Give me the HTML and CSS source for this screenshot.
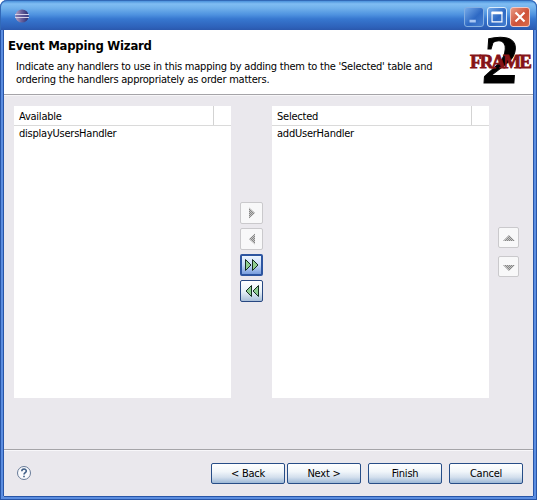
FILE: index.html
```html
<!DOCTYPE html>
<html lang="en">
<head>
<meta charset="utf-8">
<title>Event Mapping Wizard</title>
<link rel="stylesheet" href="styles.css">
</head>
<body>
<div class="window">
  <div class="titlebar">
    <svg class="app-icon" width="16" height="16" viewBox="0 0 16 16">
      <defs><linearGradient id="orb" x2="1"><stop offset="0" stop-color="#b9a5c4"/><stop offset=".45" stop-color="#69629d"/><stop offset="1" stop-color="#272c72"/></linearGradient></defs>
      <circle cx="8" cy="8" r="6.6" fill="url(#orb)"/>
      <path d="M1 6.500h14M1 9.500h14" stroke="#d5d2e8"/><path d="M2 8h12" stroke="#565399"/>
    </svg>
    <div class="controls">
      <svg class="control dim" viewBox="0 0 20 20"><path d="M5 14.500h7" stroke="#a9c8f5" stroke-width="3"/></svg>
      <svg class="control" viewBox="0 0 20 20"><path d="M4.500 5h11v10.500h-11z" fill="none" stroke="#fff" stroke-width="1.300"/><path d="M4 5.500h12" stroke="#fff" stroke-width="3"/></svg>
      <svg class="control close" viewBox="0 0 20 20"><path d="M5 5l10 10M15 5L5 15" stroke="#fff" stroke-width="2.400"/></svg>
    </div>
  </div>
  <div class="header">
    <div class="heading">
      <h1>Event Mapping Wizard</h1>
      <p>Indicate any handlers to use in this mapping by adding them to the 'Selected' table and<br>ordering the handlers appropriately as order matters.</p>
    </div>
    <svg class="logo" width="66" height="64" viewBox="0 0 66 64">
      <text class="logo-two" transform="translate(13 53) skewX(-4)" font-size="69" textLength="36" lengthAdjust="spacingAndGlyphs">2</text>
      <text class="logo-frame" x="2" y="38" font-size="19" textLength="62" lengthAdjust="spacing">FRAME</text>
    </svg>
  </div>
  <div class="content">
    <div class="table">
      <div class="table-head">Available</div>
      <div class="table-row">displayUsersHandler</div>
    </div>
    <div class="transfer">
      <div class="tool disabled"><svg width="22" height="20" viewBox="0 0 22 20"><path d="M8 4.500v11l6-5.500z" fill="url(#dots)"/></svg></div>
      <div class="tool disabled"><svg width="22" height="20" viewBox="0 0 22 20"><path d="M14 4.500v11l-6-5.500z" fill="url(#dots)"/></svg></div>
      <div class="tool active focused"><svg width="22" height="20" viewBox="0 0 22 20"><path d="M4.500 4.500v11l5.500-5.500zM11.500 4.500v11l5.500-5.500z" fill="#8fce91" stroke="#142d20"/></svg></div>
      <div class="tool active"><svg width="22" height="20" viewBox="0 0 22 20"><path d="M10.500 4.500v11l-5.500-5.500zM17.500 4.500v11l-5.500-5.500z" fill="#8fce91" stroke="#142d20"/></svg></div>
    </div>
    <div class="table">
      <div class="table-head">Selected</div>
      <div class="table-row">addUserHandler</div>
    </div>
    <div class="ordering">
      <div class="tool disabled"><svg width="20" height="20" viewBox="0 0 20 20"><path d="M4 13h12l-6-6z" fill="url(#dots)"/></svg></div>
      <div class="tool disabled"><svg width="20" height="20" viewBox="0 0 20 20"><defs><pattern id="dots" width="2" height="2" patternUnits="userSpaceOnUse"><path d="M0 0h2v2H0z" fill="#c6c6c6"/><path d="M0 0h1v1H0zM1 1h1v1H1z" fill="#858585"/></pattern></defs><path d="M4 8h12l-6 6z" fill="url(#dots)"/></svg></div>
    </div>
  </div>
  <div class="footer">
    <svg class="help" width="16" height="16" viewBox="0 0 16 16"><circle cx="8" cy="8" r="6.500" fill="#f9fafd" stroke="#687b98"/><path d="M5.800 6.300c0-3 4.500-2.900 4.500-.3C10.300 7.600 8 7.700 8 9.500M8 10.700v1.500" fill="none" stroke="#405f87" stroke-width="1.600"/></svg>
    <div class="buttons"><button>&lt; Back</button><button>Next &gt;</button><button class="spaced">Finish</button><button class="spaced">Cancel</button></div>
  </div>
</div>
</body>
</html>
```
FILE: styles.css
```css
* { box-sizing: border-box; }
body { margin: 0; background: #fff; font: 11px/13px "DejaVu Sans Condensed", "DejaVu Sans", sans-serif; font-stretch: condensed; letter-spacing: -.23px; color: #000; overflow: hidden; }
.window { width: 537px; height: 500px; display: flex; flex-direction: column; padding: 0 4px 4px; background: #5b8de0; border-radius: 7px 7px 0 0; box-shadow: inset 1px 0 #2855a8, inset -1px -1px #2855a8; }
.titlebar { height: 30px; flex: none; margin: 0 -4px; padding: 0 6px 0 14px; display: flex; align-items: center; justify-content: space-between; border: 1px solid #3269b8; border-bottom: 0; border-radius: 7px 7px 0 0; background: linear-gradient(#4b92dc 0, #80bdf3 10%, #70b0eb 25%, #4d91df 48%, #3777cf 62%, #2e62ba 90%, #2b58ad); }
.app-icon { margin: 1px 0 0 -1px; }
.controls { display: flex; gap: 3px; padding-top: 2px; }
.control { width: 20px; height: 20px; border: 1px solid #d9eafa; border-radius: 3px; background: linear-gradient(135deg, #75aae9, #2e69c4 55%, #477fd0); }
.dim { border-color: #83aee1; }
.close { border-color: #f1c8c4; background: linear-gradient(135deg, #e89a83, #cf5138 55%, #d96b4a); }
.header { height: 65px; flex: none; display: flex; justify-content: space-between; background: #fff; border-bottom: 1px solid #a5a4a8; box-shadow: -1px 0 #2855a8, 1px 0 #2855a8; }
.heading { padding: 8px 0 0 4px; white-space: nowrap; }
h1 { margin: 0; font-size: 13px; line-height: 15px; font-weight: bold; }
p { margin: 7px 0 0 8px; }
.logo { display: block; flex: none; overflow: visible; margin-right: -1px; }
.logo-two { font-family: "Liberation Serif", serif; font-weight: bold; fill: #000; stroke: #000; stroke-width: 1px; letter-spacing: 0; }
.logo-frame { font-family: "Liberation Serif", serif; font-weight: bold; fill: #861317; stroke: #861317; stroke-width: .8px; letter-spacing: 0; }
.content { flex: 1; display: flex; padding: 10px 0 0 10px; border-top: 1px solid #f7f6f8; align-items: flex-start; background: #eae8ed; box-shadow: -1px 0 #2855a8, 1px 0 #2855a8; }
.table { width: 217px; height: 292px; background: #fff; }
.table-head { height: 20px; padding: 4px 5px 0; border-bottom: 1px solid #dadada; background: linear-gradient(90deg, transparent 199px, #d3d3d3 199px, #d3d3d3 200px, transparent 200px); }
.table-row { padding: 1px 5px; }
.transfer { width: 41px; padding: 96px 0 0 9px; display: flex; flex-direction: column; gap: 4px; }
.ordering { padding: 121px 0 0 9px; display: flex; flex-direction: column; gap: 8px; }
.tool { width: 23px; height: 22px; display: flex; align-items: center; justify-content: center; border: 1px solid #cac9cc; border-radius: 2px; background: #f8f8f9; }
.tool svg { flex: none; }
.ordering .tool { width: 21px; height: 21px; }
.active { border-color: #274781; background: linear-gradient(#fff, #e6eff6 55%, #a9bfd8); }
.focused { border: 2px solid #2d55a0; background: linear-gradient(#edf6ff, #c6dafa 50%, #789ddd); }
.footer { height: 47px; flex: none; display: flex; align-items: center; justify-content: space-between; padding: 0 10px 0 12px; border-top: 1px solid #a5a4a8; background: linear-gradient(#f8f7fa 1px, #eae8ed 1px); box-shadow: -1px 0 #2855a8, 1px 0 #2855a8, 0 1px #2855a8; }
.buttons { display: flex; padding-top: 1px; gap: 2px; }
button { width: 74px; height: 21px; padding: 0; border: 1px solid #274d87; border-radius: 2px; background: linear-gradient(#fff, #f1f6fa 40%, #d3dfed 70%, #9db8d6); font: inherit; letter-spacing: inherit; color: #000; }
.spaced { margin-left: 5px; }
```
